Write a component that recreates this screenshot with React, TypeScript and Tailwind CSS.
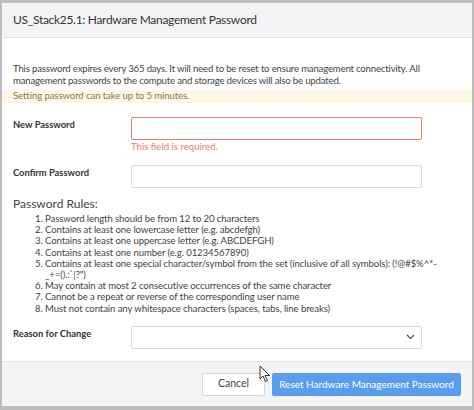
import React from "react";

const rules: React.ReactNode[] = [
  "Password length should be from 12 to 20 characters",
  "Contains at least one lowercase letter (e.g. abcdefgh)",
  "Contains at least one uppercase letter (e.g. ABCDEFGH)",
  "Contains at least one number (e.g. 01234567890)",
  <>
    Contains at least one special character/symbol from the set (inclusive of all symbols): (!@#$%^*-
    <br />
    {'_+=().:`|?")'}
  </>,
  "May contain at most 2 consecutive occurrences of the same character",
  "Cannot be a repeat or reverse of the corresponding user name",
  "Must not contain any whitespace characters (spaces, tabs, line breaks)",
];

function Cursor() {
  return (
    <svg width="12" height="18" viewBox="0 0 12 18" className="absolute left-[259px] top-[365px]">
      <path d="M1 1 L1 14 L4 11 L6.5 16.5 L8.5 15.5 L6 10.5 L10.5 10.5 Z" fill="#fff" stroke="#333" strokeWidth="1" strokeLinejoin="round" />
    </svg>
  );
}

export default function App() {
  return (
    <div
      className="relative w-[474px] h-[410px] overflow-hidden bg-[#bdbdc0] pt-[3px] pb-[4px] pl-[2px] pr-[2px] text-[#333]"
      style={{ fontFamily: 'Lato, "Noto Sans", sans-serif' }}
    >
      <div className="flex h-full flex-col bg-white">
        <div className="flex h-[35px] items-center border-b border-[#e2e2e6] bg-[#f4f4f6] px-[11px] text-[12px] tracking-[-0.3px] text-[#333]">
          US_Stack25.1: Hardware Management Password
        </div>
        <div className="flex-1 pt-[25px]">
          <p className="whitespace-nowrap px-[11px] text-[9.6px] leading-[11.5px] tracking-[-0.18px] text-[#444]">
            This password expires every 365 days. It will need to be reset to ensure management connectivity. All
            <br />
            management passwords to the compute and storage devices will also be updated.
          </p>
          <div className="mt-[4px] flex h-[13px] items-center bg-[#fdf8e6] px-[11px] text-[9.6px] tracking-[-0.1px] text-[#8a7a4c]">
            Setting password can take up to 5 minutes.
          </div>
          <div className="mt-[14px] flex px-[11px]">
            <div className="w-[118px] pt-[1px] text-[9.4px] font-bold text-[#333]">New Password</div>
            <div className="flex flex-col">
              <div className="h-[23px] w-[291px] rounded-[2px] bg-[#e3836f] p-px">
                <div className="h-full w-full rounded-[1px] bg-white" />
              </div>
              <div className="mt-[1px] text-[9.6px] leading-[12px] text-[#e0806e]">This field is required.</div>
            </div>
          </div>
          <div className="mt-[12px] flex px-[11px]">
            <div className="w-[118px] pt-[1px] text-[9.4px] font-bold text-[#333]">Confirm Password</div>
            <div className="h-[23px] w-[291px] rounded-[2px] border border-[#dcdcdc] bg-white" />
          </div>
          <div className="mt-[8px] px-[11px] text-[12px] leading-[16px] text-[#444]">Password Rules:</div>
          <ol className="mt-[1px] pl-[33px] pr-[8px] text-[9.6px] leading-[11.2px] tracking-[-0.1px] text-[#444]">
            {rules.map((r, i) => (
              <li key={i} className="flex whitespace-nowrap">
                <span className="shrink-0">{i + 1}.&nbsp;</span>
                <span>{r}</span>
              </li>
            ))}
          </ol>
          <div className="mt-[12px] flex px-[11px]">
            <div className="w-[118px] pt-[1px] text-[9.4px] font-bold text-[#333]">Reason for Change</div>
            <div className="flex h-[23px] w-[291px] items-center justify-end rounded-[2px] border border-[#dcdcdc] bg-white pr-[6px]">
              <svg width="9" height="6" viewBox="0 0 9 6">
                <path d="M1 1 L4.5 4.5 L8 1" fill="none" stroke="#555" strokeWidth="1.2" />
              </svg>
            </div>
          </div>
        </div>
        <div className="flex h-[45px] items-center justify-end gap-[7px] border-t border-[#e6e6ea] bg-[#f4f4f6] pr-[11px]">
          <button className="h-[23px] w-[63px] rounded-[2px] border border-[#d8d8d8] bg-white text-[10.5px] text-[#444]">
            Cancel
          </button>
          <button className="h-[23px] w-[189px] rounded-[2px] bg-[#5b9ded] text-[10px] text-white">
            Reset Hardware Management Password
          </button>
        </div>
      </div>
      <Cursor />
    </div>
  );
}
